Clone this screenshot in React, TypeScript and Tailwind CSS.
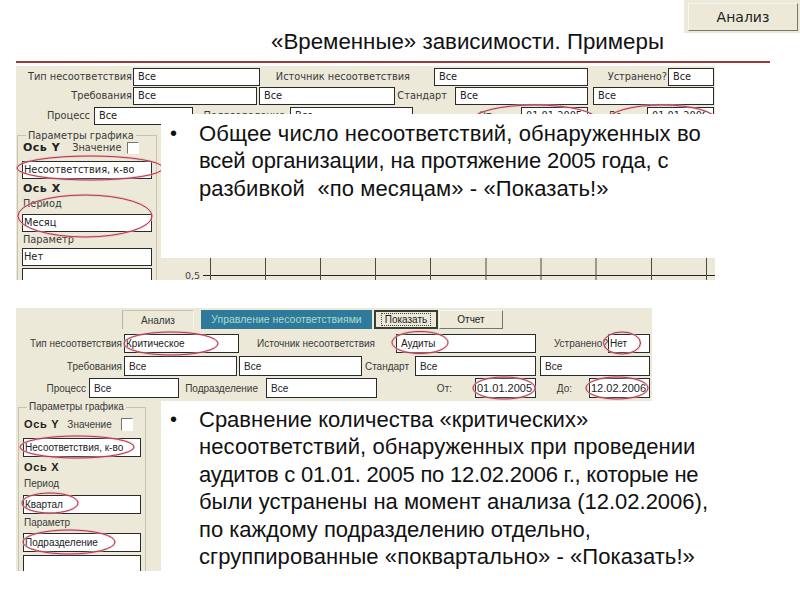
import type { ReactNode } from "react";

function Field({ className, tight, children }: { className: string; tight?: boolean; children?: ReactNode }) {
  return (
    <div className={`flex shrink-0 items-center overflow-hidden border border-[#2a2a28] bg-white text-[#222] ${tight ? "pl-px" : "pl-1"} ${className}`}>
      {children}
    </div>
  );
}

function Label({ className, children }: { className: string; children: ReactNode }) {
  return <div className={`flex shrink-0 items-center justify-end whitespace-nowrap text-[#3a3a38] ${className}`}>{children}</div>;
}

function Bullet({ children }: { children: ReactNode }) {
  return (
    <div className="flex text-[22px] leading-[27.4px] text-[#111]">
      <span className="w-[38px] shrink-0 pl-[9px] text-[20px]">•</span>
      <p className="whitespace-nowrap">{children}</p>
    </div>
  );
}

function Ellipses({ viewBox, items }: { viewBox: string; items: number[][] }) {
  return (
    <svg className="pointer-events-none absolute inset-0 h-full w-full" viewBox={viewBox}>
      {items.map(([cx, cy, rx, ry]) => (
        <g key={`${cx}-${cy}`} fill="none">
          <ellipse cx={cx} cy={cy} rx={rx} ry={ry} stroke="#e6b4bd" strokeWidth="2.4" opacity="0.6" />
          <ellipse cx={cx} cy={cy} rx={rx} ry={ry} stroke="#b3344c" strokeWidth="1" />
        </g>
      ))}
    </svg>
  );
}

function ChartStrip() {
  const ticks = [49.5, 104.5, 159.5, 214.5, 269.5, 325, 380, 435, 490.5, 545.5];
  return (
    <svg className="block h-[22px] w-[554px]" viewBox="0 0 554 22">
      <text x="24" y="21" fontSize="9.5" fill="#444" fontFamily="DejaVu Sans">
        0,5
      </text>
      <line x1="42" y1="17.5" x2="554" y2="17.5" stroke="#222" />
      {ticks.map((x) => (
        <line key={x} x1={x} y1="0" x2={x} y2="22" stroke="#4a4a44" />
      ))}
    </svg>
  );
}

export default function App() {
  return (
    <div className="relative h-[600px] w-[800px] overflow-hidden bg-white font-['Liberation_Sans',sans-serif]">
      <header className="flex h-[61px] justify-between">
        <h1 className="whitespace-nowrap pl-[271px] pt-[30px] text-[22.3px] leading-[24px] text-[#111]">«Временные» зависимости. Примеры</h1>
        <div className="h-[33px] w-[116px] bg-[#ece9d8] pl-1 pt-[3px]">
          <button className="h-[28px] w-[110px] border border-[#f8f7ef] border-b-[#77766c] border-r-[#77766c] font-['DejaVu_Sans',sans-serif] text-[14px] text-[#222]">
            Анализ
          </button>
        </div>
      </header>
      <div className="ml-4 h-[2px] w-[754px] bg-[#9a3a3c]" />

      <section className="relative ml-4 mt-[3px] h-[214px] w-[699px] overflow-hidden bg-[#ece9d8] font-['DejaVu_Sans',sans-serif] text-[9.8px]">
        <div className="mt-[2px] flex h-[18px]">
          <Label className="w-[116px]">Тип несоответствия</Label>
          <Field className="ml-px w-[127px]">Все</Field>
          <Label className="ml-[17px] w-[133px]">Источник несоответствия</Label>
          <Field className="ml-6 w-[154px]">Все</Field>
          <Label className="ml-[17px] w-[62px]">Устранено?</Label>
          <Field className="ml-px w-[46px]">Все</Field>
        </div>
        <div className="mt-px flex h-[18px]">
          <Label className="w-[116px]">Требования</Label>
          <Field className="ml-px w-[124px]">Все</Field>
          <Field className="ml-[2px] w-[136px]">Все</Field>
          <Label className="ml-[6px] w-[46px]">Стандарт</Label>
          <Field className="ml-2 w-[133px]">Все</Field>
          <Field className="ml-[5px] w-[121px]">Все</Field>
        </div>
        <div className="mt-[2px] flex h-[18px]">
          <Label className="w-[74px]">Процесс</Label>
          <Field className="ml-1 w-[99px]">Все</Field>
          <Label className="ml-[7px] w-[85px]">Подразделение</Label>
          <Field className="ml-[5px] w-[123px]">Все</Field>
          <Label className="ml-[67px] w-[15px]">От:</Label>
          <Field className="ml-[26px] w-[67px]">01.01.2005</Field>
          <Label className="ml-[22px] w-[15px]">До:</Label>
          <Field className="ml-[22px] w-[67px]">01.01.2006</Field>
        </div>
        <div className="mt-[5px] flex">
          <fieldset className="ml-px h-[160px] w-[140px] border border-[#c6c3b2]">
            <legend className="ml-2 px-[2px] text-[9.8px] leading-[11px] text-[#3a3a38]">Параметры графика</legend>
            <div className="flex h-[14px] items-center pl-[5px]">
              <b className="text-[11px] tracking-[0.5px] text-[#222]">Ось Y</b>
              <span className="ml-[12px] text-[#3a3a38]">Значение</span>
              <span className="ml-[6px] h-[12px] w-[12px] border border-[#77766c] border-b-white border-r-white bg-white" />
            </div>
            <Field tight className="ml-1 mt-[6px] h-[18px] w-[130px]">Несоответствия, к-во</Field>
            <div className="mt-[2px] h-[15px] pl-[5px] text-[11px] font-bold leading-[15px] tracking-[0.5px] text-[#222]">Ось X</div>
            <div className="mt-[2px] h-[12px] pl-[5px] leading-[12px] text-[#3a3a38]">Период</div>
            <Field tight className="ml-1 mt-[4px] h-[18px] w-[130px]">Месяц</Field>
            <div className="mt-[2px] h-[12px] pl-[5px] leading-[12px] text-[#3a3a38]">Параметр</div>
            <Field tight className="ml-1 mt-[2px] h-[18px] w-[130px]">Нет</Field>
            <Field tight className="ml-1 mt-[2px] h-[18px] w-[130px]" />
          </fieldset>
        </div>
        <div className="absolute bottom-0 right-0">
          <ChartStrip />
        </div>
        <Ellipses
          viewBox="16 66 699 214"
          items={[
            [90, 168, 73, 12],
            [85, 216, 67, 21],
            [535, 120, 62, 15],
            [662, 120, 54, 15],
          ]}
        />
        <div className="absolute bottom-[22px] left-[145px] right-0 top-[48px] bg-white pt-[6px] font-['Liberation_Sans',sans-serif]">
          <Bullet>
            <span className="tracking-[0.12px]">Общее число несоответствий, обнаруженных во</span>
            <br />
            <span className="tracking-[-0.11px]">всей организации, на протяжение 2005 года, с</span>
            <br />
            <span className="tracking-[0.1px]">разбивкой {"\u00a0"}«по месяцам» - «Показать!»</span>
          </Bullet>
        </div>
      </section>

      <section className="relative ml-4 mt-[28px] w-[636px] text-[10px]">
        <div className="h-[93px] bg-[#ece9d8]">
          <div className="flex h-[26px] pl-[106px] pt-[2px]">
            <div className="flex h-[19px] w-[72px] items-center justify-center border border-b-0 border-[#f6f5ea] border-l-[#b5b3a2] border-t-[#c4c2b0] text-[#333]">
              Анализ
            </div>
            <div className="ml-[7px] flex h-[19px] w-[171px] items-center justify-center whitespace-nowrap bg-[#2f7a9a] text-[10.5px] text-[#a9dccf]">
              Управление несоответствиями
            </div>
            <button className="ml-[2px] h-[19px] w-[64px] border-2 border-[#3c3c36] text-[#222]">
              <span className="border border-dotted border-[#444] px-[3px]">Показать</span>
            </button>
            <button className="ml-px h-[19px] w-[64px] border border-[#f8f7ef] border-b-[#77766c] border-r-[#77766c] text-[#222]">Отчет</button>
          </div>
          <div className="flex h-[19px]">
            <Label className="w-[106px]">Тип несоответствия</Label>
            <Field tight className="ml-[2px] w-[115px]">Критическое</Field>
            <Label className="ml-4 w-[120px]">Источник несоответствия</Label>
            <Field className="ml-[21px] w-[140px]">Аудиты</Field>
            <Label className="ml-4 w-[56px]">Устранено?</Label>
            <Field tight className="w-[42px]">Нет</Field>
          </div>
          <div className="mt-[3px] flex h-[20px]">
            <Label className="w-[106px]">Требования</Label>
            <Field className="ml-[2px] w-[113px]">Все</Field>
            <Field className="ml-[2px] w-[123px]">Все</Field>
            <Label className="ml-[5px] w-[42px]">Стандарт</Label>
            <Field className="ml-[6px] w-[121px]">Все</Field>
            <Field className="ml-1 w-[110px]">Все</Field>
          </div>
          <div className="mt-[2px] flex h-[20px]">
            <Label className="w-[70px]">Процесс</Label>
            <Field className="ml-[3px] w-[90px]">Все</Field>
            <Label className="ml-[7px] w-[72px]">Подразделение</Label>
            <Field className="ml-2 w-[111px]">Все</Field>
            <Label className="ml-[58px] w-[17px]">От:</Label>
            <Field tight className="ml-[23px] w-[61px] text-[11px]">01.01.2005</Field>
            <Label className="ml-5 w-4">До:</Label>
            <Field tight className="ml-[17px] w-[61px] text-[11px]">12.02.2006</Field>
          </div>
        </div>
        <div className="flex">
          <div className="h-[170px] w-[145px] shrink-0 overflow-hidden bg-[#ece9d8]">
            <fieldset className="ml-[2px] h-[180px] w-[128px] border border-[#c6c3b2]">
              <legend className="ml-2 px-[2px] leading-[12px] text-[#3a3a38]">Параметры графика</legend>
              <div className="mt-[4px] flex h-[14px] items-center pl-[5px]">
                <b className="text-[11px] tracking-[0.7px] text-[#222]">Ось Y</b>
                <span className="ml-[8px] text-[#3a3a38]">Значение</span>
                <span className="ml-[9px] h-[13px] w-[12px] border border-[#77766c] border-b-white border-r-white bg-white" />
              </div>
              <Field tight className="ml-1 mt-[7px] h-[19px] w-[118px]">Несоответствия, к-во</Field>
              <div className="mt-[3px] h-[14px] pl-[5px] text-[11px] font-bold leading-[14px] tracking-[0.7px] text-[#222]">Ось X</div>
              <div className="mt-[4px] h-[12px] pl-[5px] leading-[12px] text-[#3a3a38]">Период</div>
              <Field tight className="ml-1 mt-[5px] h-[19px] w-[118px]">Квартал</Field>
              <div className="mt-[3px] h-[12px] pl-[5px] leading-[12px] text-[#3a3a38]">Параметр</div>
              <Field tight className="ml-1 mt-[4px] h-[19px] w-[118px]">Подразделение</Field>
              <Field tight className="ml-1 mt-[3px] h-[19px] w-[118px]" />
            </fieldset>
          </div>
          <div className="pt-[5px]">
            <Bullet>
              Сравнение количества «критических»
              <br />
              <span className="tracking-[0.09px]">несоответствий, обнаруженных при проведении</span>
              <br />
              <span className="tracking-[-0.24px]">аудитов с 01.01. 2005 по 12.02.2006 г., которые не</span>
              <br />
              были устранены на момент анализа (12.02.2006),
              <br />
              по каждому подразделению отдельно,
              <br />
              <span className="tracking-[0.07px]">сгруппированные «поквартально» - «Показать!»</span>
            </Bullet>
          </div>
        </div>
        <Ellipses
          viewBox="16 308 636 263"
          items={[
            [171, 343.5, 47, 11.5],
            [420, 342.5, 28, 11],
            [622, 343, 18.5, 11],
            [504, 388, 31, 11],
            [617, 388, 31, 11],
            [77, 447, 57, 11],
            [50, 503, 28, 10],
            [69, 542, 46, 12],
          ]}
        />
      </section>
    </div>
  );
}
